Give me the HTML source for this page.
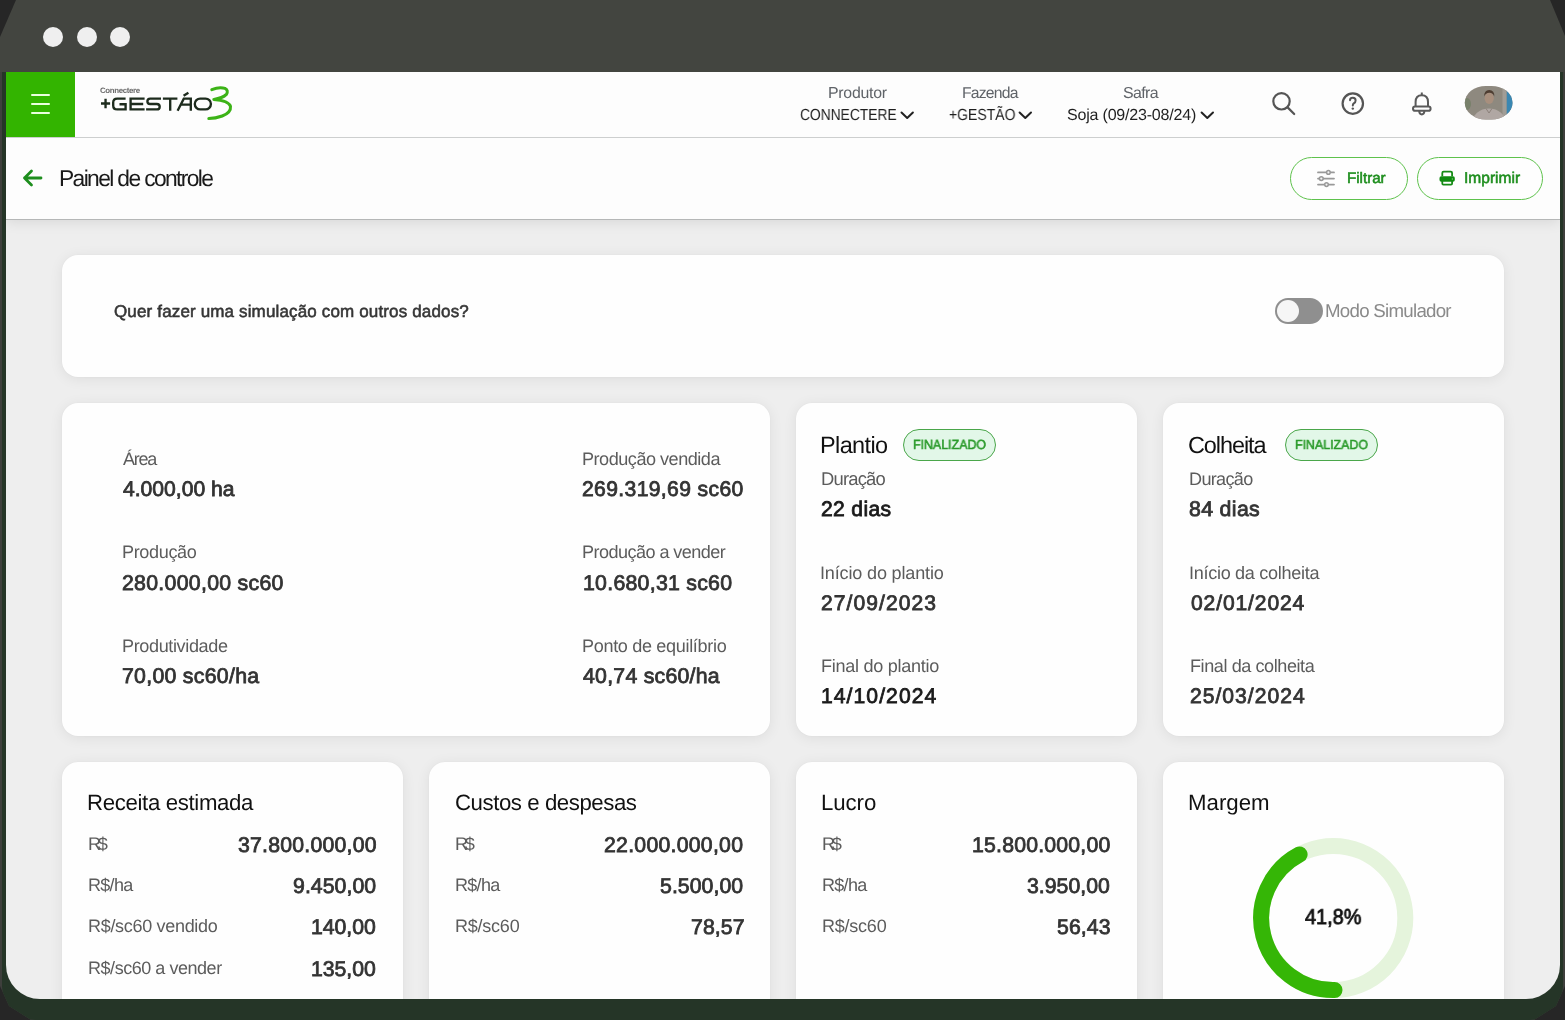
<!DOCTYPE html>
<html><head><meta charset="utf-8">
<style>
html,body{margin:0;padding:0;}
body{width:1565px;height:1020px;overflow:hidden;position:relative;background:#262626;font-family:"Liberation Sans",sans-serif;}
.frame{position:absolute;left:0;top:0;width:1565px;height:1020px;background:linear-gradient(#434540 0,#434540 72px,#3e3f3c 72px);clip-path:polygon(16px 0,1550px 0,1565px 36px,1565px 986px,1556px 1006px,1534px 1020px,31px 1020px,9px 1006px,0 986px,0 37px);overflow:hidden;}
.green{position:absolute;left:2px;top:72px;width:1561px;height:948px;background:#253527;border-radius:0 0 34px 34px;}
.dot{position:absolute;top:27px;width:20px;height:20px;border-radius:50%;background:#efefef;}
.screen{position:absolute;left:6px;top:72px;width:1554px;height:927px;background:#eeeeee;border-radius:0 0 34px 34px;overflow:hidden;}
.g{position:absolute;}
.hdr{position:absolute;left:0;top:0;width:1554px;height:65px;background:#fdfdfd;border-bottom:1px solid #cdcfcf;}
.menu{position:absolute;left:0;top:0;width:69px;height:65px;background:#33b400;}
.menu i{position:absolute;left:25px;width:19px;height:2.4px;background:#eaffdf;border-radius:1px;}
.sub{position:absolute;left:0;top:66px;width:1554px;height:81px;background:#fdfdfd;border-bottom:1px solid #b5b7b7;box-shadow:0 3px 12px rgba(0,0,0,0.085);}
.card{position:absolute;background:#fefefe;border-radius:16px;box-shadow:0 2px 14px rgba(0,0,0,0.075),0 0 2px rgba(0,0,0,0.03);}
.btn{position:absolute;border:1.6px solid #5ec24c;border-radius:22px;box-sizing:border-box;background:#fefefe;}
.badge{position:absolute;border:1.8px solid #4aa64a;border-radius:16px;box-sizing:border-box;background:#e2f7e8;}
.t{position:absolute;white-space:nowrap;text-rendering:geometricPrecision;will-change:transform;}
.toggle{position:absolute;left:1269px;top:226px;width:48px;height:26px;border-radius:13px;background:#8f8f8f;}
.toggle i{position:absolute;left:2px;top:2px;width:22px;height:22px;border-radius:50%;background:#f6f6f6;}
</style></head><body>
<div class="frame">
  <div class="green"></div>
  <div class="dot" style="left:43px"></div>
  <div class="dot" style="left:77px"></div>
  <div class="dot" style="left:110px"></div>
  <div class="screen">
    <div class="sub"></div>
    <div class="hdr">
      <div class="menu"><i style="top:22px"></i><i style="top:30.5px"></i><i style="top:39.5px"></i></div>
    </div>
    <!-- cards (screen coords: x-6, y-72) -->
    <div class="card" style="left:56px;top:183px;width:1442px;height:122px;"></div>
    <div class="card" style="left:56px;top:331px;width:708px;height:333px;"></div>
    <div class="card" style="left:790px;top:331px;width:341px;height:333px;"></div>
    <div class="card" style="left:1157px;top:331px;width:341px;height:333px;"></div>
    <div class="card" style="left:56px;top:690px;width:341px;height:300px;"></div>
    <div class="card" style="left:423px;top:690px;width:341px;height:300px;"></div>
    <div class="card" style="left:790px;top:690px;width:341px;height:300px;"></div>
    <div class="card" style="left:1157px;top:690px;width:341px;height:300px;"></div>
    <div class="toggle"><i></i></div>
  </div>
</div>
<!-- global overlay elements -->
<div class="btn" style="left:1290px;top:157px;width:118px;height:43px;"></div>
<div class="btn" style="left:1417px;top:157px;width:126px;height:43px;"></div>
<div class="badge" style="left:903px;top:429px;width:93px;height:32px;"></div>
<div class="badge" style="left:1285px;top:429px;width:93px;height:32px;"></div>
<svg class="g" style="left:0;top:0" width="1565" height="1020" viewBox="0 0 1565 1020">
  <!-- back arrow -->
  <g fill="none" stroke="#1e8e1e" stroke-width="2.8" stroke-linecap="round" stroke-linejoin="round">
    <path d="M24.5,178 H41 M31.5,171 L24.5,178 L31.5,185"/>
  </g>
  <!-- chevrons -->
  <g fill="none" stroke="#222" stroke-width="2" stroke-linecap="round" stroke-linejoin="round">
    <path d="M901.5,112.5 L907.2,118 L912.9,112.5"/>
    <path d="M1019.6,112.5 L1025.3,118 L1031,112.5"/>
    <path d="M1201.6,112.5 L1207.3,118 L1213,112.5"/>
  </g>
  <!-- search -->
  <g fill="none" stroke="#555" stroke-width="2.2" stroke-linecap="round">
    <circle cx="1281.5" cy="101.3" r="8.2"/>
    <path d="M1287.6,107.4 L1294.2,114"/>
  </g>
  <!-- help -->
  <g fill="none" stroke="#555" stroke-width="2.2">
    <circle cx="1352.8" cy="103.6" r="10.2"/>
  </g>
  <path d="M1350,100.2 Q1350.2,97.8 1352.8,97.8 Q1355.6,97.8 1355.6,100.4 Q1355.6,102.2 1353.8,103.4 Q1352.8,104.2 1352.8,105.5" fill="none" stroke="#555" stroke-width="2" stroke-linecap="round"/>
  <circle cx="1352.8" cy="108.6" r="1.2" fill="#555"/>
  <!-- bell -->
  <g fill="none" stroke="#5a5a5a" stroke-width="2" stroke-linejoin="round">
    <path d="M1421.8,92.5 V95.2"/>
    <path d="M1415.6,106.6 V102 Q1415.6,95.2 1421.8,95.2 Q1428,95.2 1428,102 V106.6"/>
    <rect x="1413" y="106.6" width="17.6" height="4.2" rx="2.1"/>
    <path d="M1419.2,111 Q1419.4,114.4 1421.8,114.4 Q1424.2,114.4 1424.4,111"/>
  </g>
  <!-- avatar -->
  <defs>
    <radialGradient id="face" cx="0.5" cy="0.35" r="0.25"><stop offset="0" stop-color="#b79c86"/><stop offset="0.6" stop-color="#8c7565"/><stop offset="1" stop-color="#8d8a80" stop-opacity="0"/></radialGradient>
    <radialGradient id="shirt" cx="0.5" cy="1.05" r="0.55"><stop offset="0" stop-color="#c0b5b0"/><stop offset="0.7" stop-color="#a9a09a"/><stop offset="1" stop-color="#8d8a80" stop-opacity="0"/></radialGradient>
    <clipPath id="avclip"><rect x="1464.8" y="85.9" width="47.7" height="33.6" rx="21" ry="16.8"/></clipPath>
  </defs>
  <g clip-path="url(#avclip)">
    <rect x="1464" y="85" width="50" height="36" fill="#8e897f"/>
    <ellipse cx="1467" cy="104" rx="4" ry="6" fill="#6f7d62" opacity="0.7"/>
    <rect x="1506.5" y="85" width="8" height="36" fill="#3a87b2"/>
    <rect x="1502.5" y="85" width="4" height="36" fill="#a19d96"/>
    <ellipse cx="1489" cy="123" rx="17" ry="14.5" fill="#b0a7a3"/>
    <path d="M1486,108.5 L1489,113 L1492,108.5" fill="none" stroke="#8b807a" stroke-width="1"/>
    <ellipse cx="1489.2" cy="98.2" rx="4.6" ry="5.8" fill="#a88f7d"/>
    <path d="M1484.3,96.5 Q1484,90 1489.2,90 Q1494.6,90 1494.2,96.5 Q1493,92.6 1489.2,92.8 Q1485.6,92.8 1484.3,96.5Z" fill="#4e3d31"/>
  </g>
  <!-- sliders icon -->
  <g fill="none" stroke="#999" stroke-width="1.8" stroke-linecap="round">
    <path d="M1318,172.4 H1334 M1318,178.6 H1334 M1318,184.6 H1334"/>
  </g>
  <g fill="#f4f4f4" stroke="#999" stroke-width="1.5">
    <circle cx="1328.4" cy="172.4" r="1.8"/>
    <circle cx="1321.3" cy="178.6" r="1.9"/>
    <circle cx="1326.5" cy="184.6" r="1.8"/>
  </g>
  <!-- printer icon -->
  <path d="M1442.3,176.3 V173 Q1442.3,171.7 1443.6,171.7 H1450.8 Q1452.1,171.7 1452.1,173 V176.3" fill="none" stroke="#158a15" stroke-width="1.8"/>
  <rect x="1439.5" y="176.2" width="15.3" height="5.6" rx="1.8" fill="#0f8a0f"/>
  <path d="M1442.3,181 V183.6 Q1442.3,184.7 1443.4,184.7 H1451 Q1452.1,184.7 1452.1,183.6 V181" fill="none" stroke="#158a15" stroke-width="1.8"/>
  <circle cx="1452.4" cy="179" r="0.75" fill="#6fd46f"/>
  <!-- donut -->
  <circle cx="1333.3" cy="918.1" r="72" fill="none" stroke="#e5f4dc" stroke-width="16"/>
  <path d="M1334.5,990.1 A72,72 0 0 1 1299.6,854.4" fill="none" stroke="#35b606" stroke-width="16" stroke-linecap="round"/>
  <!-- logo -->
  <g fill="none" stroke="#1d2b1d" stroke-width="2.35">
    <path d="M101,103.5 H110.1 M105.55,98.7 V108.3"/>
    <path d="M125.6,98.6 H117.2 Q113.2,98.6 113.2,102.6 V105.4 Q113.2,109.4 117.2,109.4 H125.6 V104.2 H119.5"/>
    <path d="M144.6,98.6 H130.6 V109.4 H144.6 M130.6,104 H143.2"/>
    <path d="M161,98.6 H150.2 Q147.4,98.6 147.4,101.3 Q147.4,104 150.2,104 H156.8 Q159.7,104 159.7,106.7 Q159.7,109.4 156.8,109.4 H146.1"/>
    <path d="M162.9,98.6 H177.4 M170.2,98.6 V110.7"/>
    <path d="M177.6,110.7 L183.8,98.6 H190.8 V110.7 M180.6,104.6 H190.8"/>
    <rect x="194.8" y="98.6" width="16.1" height="10.8" rx="5.4"/>
  </g>
  <path d="M183.6,95.8 L188.4,92.8" stroke="#1d2b1d" stroke-width="2.4"/>
  <path d="M211.8,89.6 Q219.5,86.4 225,88.4 Q228.8,90.2 226.4,94.4 Q222.6,98.2 213.8,99.4 Q229.2,100.8 230.5,106.4 Q231.2,112.6 222.2,116 Q215.4,118.4 208.8,118.6" fill="none" stroke="#3cb317" stroke-width="3" stroke-linecap="round" stroke-linejoin="round"/>
</svg>
<div class="t" id="produtor" style="left:828.00px;top:85.80px;font-size:15.878px;line-height:15.878px;letter-spacing:-0.250px;color:#5f6368;font-weight:400;">Produtor</div>
<div class="t" id="connectere" style="left:799.56px;top:108.08px;font-size:16.005px;line-height:16.005px;letter-spacing:0.000px;color:#1f1f1f;font-weight:400;transform:scaleX(0.8632);transform-origin:0 0;">CONNECTERE</div>
<div class="t" id="fazenda" style="left:961.80px;top:85.86px;font-size:15.740px;line-height:15.740px;letter-spacing:-0.793px;color:#5f6368;font-weight:400;">Fazenda</div>
<div class="t" id="gestao" style="left:948.56px;top:107.05px;font-size:16.061px;line-height:16.061px;letter-spacing:0.000px;color:#1f1f1f;font-weight:400;transform:scaleX(0.8722);transform-origin:0 0;">+GESTÃO</div>
<div class="t" id="safra" style="left:1123.20px;top:85.61px;font-size:15.934px;line-height:15.934px;letter-spacing:-0.600px;color:#5f6368;font-weight:400;">Safra</div>
<div class="t" id="soja" style="left:1067.00px;top:107.24px;font-size:16.046px;line-height:16.046px;letter-spacing:-0.205px;color:#1f1f1f;font-weight:400;">Soja (09/23-08/24)</div>
<div class="t" id="painel" style="left:58.80px;top:166.69px;font-size:22.831px;line-height:22.831px;letter-spacing:-1.633px;color:#1a1a1a;font-weight:400;">Painel de controle</div>
<div class="t" id="filtrar" style="left:1346.60px;top:171.16px;font-size:15.205px;line-height:15.205px;letter-spacing:-0.027px;color:#1e8e1e;font-weight:400;-webkit-text-stroke:0.55px #1e8e1e;">Filtrar</div>
<div class="t" id="imprimir" style="left:1463.80px;top:171.33px;font-size:15.562px;line-height:15.562px;letter-spacing:0.000px;color:#1e8e1e;font-weight:400;-webkit-text-stroke:0.55px #1e8e1e;">Imprimir</div>
<div class="t" id="quer" style="left:114.00px;top:302.65px;font-size:17.015px;line-height:17.015px;letter-spacing:0.148px;color:#363636;font-weight:400;-webkit-text-stroke:0.55px #363636;">Quer fazer uma simulação com outros dados?</div>
<div class="t" id="modo" style="left:1325.40px;top:301.73px;font-size:18.694px;line-height:18.694px;letter-spacing:-0.729px;color:#8a8a8a;font-weight:400;">Modo Simulador</div>
<div class="t" id="area" style="left:122.60px;top:450.29px;font-size:18.030px;line-height:18.030px;letter-spacing:-1.263px;color:#5c5c5c;font-weight:400;">Área</div>
<div class="t" id="areav" style="left:122.60px;top:478.62px;font-size:21.113px;line-height:21.113px;letter-spacing:0.010px;color:#333333;font-weight:400;-webkit-text-stroke:0.8px #333333;">4.000,00 ha</div>
<div class="t" id="prod" style="left:122.00px;top:543.26px;font-size:18.078px;line-height:18.078px;letter-spacing:-0.358px;color:#5c5c5c;font-weight:400;">Produção</div>
<div class="t" id="prodv" style="left:122.00px;top:573.47px;font-size:21.296px;line-height:21.296px;letter-spacing:0.287px;color:#333333;font-weight:400;-webkit-text-stroke:0.8px #333333;">280.000,00 sc60</div>
<div class="t" id="produt" style="left:122.00px;top:637.26px;font-size:18.078px;line-height:18.078px;letter-spacing:-0.374px;color:#5c5c5c;font-weight:400;">Produtividade</div>
<div class="t" id="produtv" style="left:121.80px;top:665.97px;font-size:21.296px;line-height:21.296px;letter-spacing:0.283px;color:#333333;font-weight:400;-webkit-text-stroke:0.8px #333333;">70,00 sc60/ha</div>
<div class="t" id="pvend" style="left:582.20px;top:450.28px;font-size:18.086px;line-height:18.086px;letter-spacing:-0.483px;color:#5c5c5c;font-weight:400;">Produção vendida</div>
<div class="t" id="pvendv" style="left:582.20px;top:478.62px;font-size:21.113px;line-height:21.113px;letter-spacing:0.366px;color:#333333;font-weight:400;-webkit-text-stroke:0.8px #333333;">269.319,69 sc60</div>
<div class="t" id="paven" style="left:582.20px;top:543.27px;font-size:18.058px;line-height:18.058px;letter-spacing:-0.542px;color:#5c5c5c;font-weight:400;">Produção a vender</div>
<div class="t" id="pavenv" style="left:583.00px;top:573.47px;font-size:21.296px;line-height:21.296px;letter-spacing:0.270px;color:#333333;font-weight:400;-webkit-text-stroke:0.8px #333333;">10.680,31 sc60</div>
<div class="t" id="ponto" style="left:582.20px;top:637.27px;font-size:18.058px;line-height:18.058px;letter-spacing:-0.324px;color:#5c5c5c;font-weight:400;">Ponto de equilíbrio</div>
<div class="t" id="pontov" style="left:583.00px;top:665.97px;font-size:21.296px;line-height:21.296px;letter-spacing:0.250px;color:#333333;font-weight:400;-webkit-text-stroke:0.8px #333333;">40,74 sc60/ha</div>
<div class="t" id="pltitle" style="left:820.40px;top:433.70px;font-size:23.463px;line-height:23.463px;letter-spacing:-0.607px;color:#111;font-weight:400;">Plantio</div>
<div class="t" id="plbadge" style="left:912.80px;top:437.79px;font-size:13.285px;line-height:13.285px;letter-spacing:0.000px;color:#2a9a2a;font-weight:400;-webkit-text-stroke:0.55px #2a9a2a;transform:scaleX(0.9351);transform-origin:0 0;">FINALIZADO</div>
<div class="t" id="pldur" style="left:821.40px;top:469.95px;font-size:18.405px;line-height:18.405px;letter-spacing:-0.805px;color:#5c5c5c;font-weight:400;">Duração</div>
<div class="t" id="pldurv" style="left:821.40px;top:498.62px;font-size:21.113px;line-height:21.113px;letter-spacing:0.333px;color:#1a1a1a;font-weight:400;-webkit-text-stroke:0.8px #1a1a1a;">22 dias</div>
<div class="t" id="plini" style="left:820.00px;top:563.77px;font-size:18.060px;line-height:18.060px;letter-spacing:-0.162px;color:#5c5c5c;font-weight:400;">Início do plantio</div>
<div class="t" id="pliniv" style="left:821.00px;top:593.16px;font-size:21.066px;line-height:21.066px;letter-spacing:1.073px;color:#333333;font-weight:400;-webkit-text-stroke:0.8px #333333;">27/09/2023</div>
<div class="t" id="plfim" style="left:821.00px;top:656.77px;font-size:18.060px;line-height:18.060px;letter-spacing:-0.280px;color:#5c5c5c;font-weight:400;">Final do plantio</div>
<div class="t" id="plfimv" style="left:821.00px;top:686.12px;font-size:21.113px;line-height:21.113px;letter-spacing:1.072px;color:#1a1a1a;font-weight:400;-webkit-text-stroke:0.8px #1a1a1a;">14/10/2024</div>
<div class="t" id="cotitle" style="left:1188.40px;top:433.70px;font-size:23.463px;line-height:23.463px;letter-spacing:-1.072px;color:#111;font-weight:400;">Colheita</div>
<div class="t" id="cobadge" style="left:1294.56px;top:438.00px;font-size:13.051px;line-height:13.051px;letter-spacing:0.000px;color:#2a9a2a;font-weight:400;-webkit-text-stroke:0.55px #2a9a2a;transform:scaleX(0.9502);transform-origin:0 0;">FINALIZADO</div>
<div class="t" id="codur" style="left:1189.00px;top:470.26px;font-size:18.078px;line-height:18.078px;letter-spacing:-0.667px;color:#5c5c5c;font-weight:400;">Duração</div>
<div class="t" id="codurv" style="left:1189.00px;top:499.47px;font-size:21.296px;line-height:21.296px;letter-spacing:0.347px;color:#333333;font-weight:400;-webkit-text-stroke:0.8px #333333;">84 dias</div>
<div class="t" id="coini" style="left:1188.60px;top:563.77px;font-size:18.054px;line-height:18.054px;letter-spacing:-0.293px;color:#5c5c5c;font-weight:400;">Início da colheita</div>
<div class="t" id="coiniv" style="left:1190.60px;top:593.16px;font-size:21.066px;line-height:21.066px;letter-spacing:0.887px;color:#333333;font-weight:400;-webkit-text-stroke:0.8px #333333;">02/01/2024</div>
<div class="t" id="cofim" style="left:1189.60px;top:656.77px;font-size:18.054px;line-height:18.054px;letter-spacing:-0.417px;color:#5c5c5c;font-weight:400;">Final da colheita</div>
<div class="t" id="cofimv" style="left:1189.60px;top:686.12px;font-size:21.113px;line-height:21.113px;letter-spacing:0.997px;color:#333333;font-weight:400;-webkit-text-stroke:0.8px #333333;">25/03/2024</div>
<div class="t" id="ret" style="left:87.20px;top:792.19px;font-size:22.217px;line-height:22.217px;letter-spacing:-0.340px;color:#111;font-weight:400;">Receita estimada</div>
<div class="t" id="rel0" style="left:88.20px;top:834.76px;font-size:18.186px;line-height:18.186px;letter-spacing:-3.400px;color:#5c5c5c;font-weight:400;">R$</div>
<div class="t" id="rev0" style="left:238.00px;top:834.52px;font-size:21.237px;line-height:21.237px;letter-spacing:0.239px;color:#333333;font-weight:400;-webkit-text-stroke:0.8px #333333;">37.800.000,00</div>
<div class="t" id="rel1" style="left:88.20px;top:876.29px;font-size:18.013px;line-height:18.013px;letter-spacing:-0.700px;color:#5c5c5c;font-weight:400;">R$/ha</div>
<div class="t" id="rev1" style="left:293.00px;top:876.01px;font-size:21.246px;line-height:21.246px;letter-spacing:0.070px;color:#333333;font-weight:400;-webkit-text-stroke:0.8px #333333;">9.450,00</div>
<div class="t" id="rel2" style="left:88.20px;top:916.79px;font-size:18.013px;line-height:18.013px;letter-spacing:-0.309px;color:#5c5c5c;font-weight:400;">R$/sc60 vendido</div>
<div class="t" id="rev2" style="left:311.40px;top:916.52px;font-size:21.237px;line-height:21.237px;letter-spacing:-0.040px;color:#333333;font-weight:400;-webkit-text-stroke:0.8px #333333;">140,00</div>
<div class="t" id="rel3" style="left:88.20px;top:959.29px;font-size:18.013px;line-height:18.013px;letter-spacing:-0.461px;color:#5c5c5c;font-weight:400;">R$/sc60 a vender</div>
<div class="t" id="rev3" style="left:311.40px;top:959.02px;font-size:21.237px;line-height:21.237px;letter-spacing:-0.040px;color:#333333;font-weight:400;-webkit-text-stroke:0.8px #333333;">135,00</div>
<div class="t" id="cut" style="left:455.20px;top:792.19px;font-size:22.217px;line-height:22.217px;letter-spacing:-0.429px;color:#111;font-weight:400;">Custos e despesas</div>
<div class="t" id="cul0" style="left:455.20px;top:834.76px;font-size:18.186px;line-height:18.186px;letter-spacing:-3.400px;color:#5c5c5c;font-weight:400;">R$</div>
<div class="t" id="cuv0" style="left:604.00px;top:834.52px;font-size:21.237px;line-height:21.237px;letter-spacing:0.273px;color:#333333;font-weight:400;-webkit-text-stroke:0.8px #333333;">22.000.000,00</div>
<div class="t" id="cul1" style="left:455.20px;top:876.29px;font-size:18.013px;line-height:18.013px;letter-spacing:-0.700px;color:#5c5c5c;font-weight:400;">R$/ha</div>
<div class="t" id="cuv1" style="left:660.20px;top:876.01px;font-size:21.246px;line-height:21.246px;letter-spacing:0.070px;color:#333333;font-weight:400;-webkit-text-stroke:0.8px #333333;">5.500,00</div>
<div class="t" id="cul2" style="left:455.20px;top:916.79px;font-size:18.013px;line-height:18.013px;letter-spacing:-0.230px;color:#5c5c5c;font-weight:400;">R$/sc60</div>
<div class="t" id="cuv2" style="left:690.80px;top:916.52px;font-size:21.237px;line-height:21.237px;letter-spacing:0.125px;color:#333333;font-weight:400;-webkit-text-stroke:0.8px #333333;">78,57</div>
<div class="t" id="lut" style="left:821.20px;top:792.19px;font-size:22.217px;line-height:22.217px;letter-spacing:-0.075px;color:#111;font-weight:400;">Lucro</div>
<div class="t" id="lul0" style="left:822.20px;top:834.76px;font-size:18.186px;line-height:18.186px;letter-spacing:-3.400px;color:#5c5c5c;font-weight:400;">R$</div>
<div class="t" id="luv0" style="left:972.20px;top:834.51px;font-size:21.246px;line-height:21.246px;letter-spacing:0.204px;color:#333333;font-weight:400;-webkit-text-stroke:0.8px #333333;">15.800.000,00</div>
<div class="t" id="lul1" style="left:822.20px;top:876.29px;font-size:18.013px;line-height:18.013px;letter-spacing:-0.700px;color:#5c5c5c;font-weight:400;">R$/ha</div>
<div class="t" id="luv1" style="left:1027.00px;top:876.02px;font-size:21.237px;line-height:21.237px;letter-spacing:0.036px;color:#333333;font-weight:400;-webkit-text-stroke:0.8px #333333;">3.950,00</div>
<div class="t" id="lul2" style="left:822.20px;top:916.79px;font-size:18.013px;line-height:18.013px;letter-spacing:-0.230px;color:#5c5c5c;font-weight:400;">R$/sc60</div>
<div class="t" id="luv2" style="left:1056.80px;top:916.52px;font-size:21.237px;line-height:21.237px;letter-spacing:0.125px;color:#333333;font-weight:400;-webkit-text-stroke:0.8px #333333;">56,43</div>
<div class="t" id="mat" style="left:1187.60px;top:792.19px;font-size:22.226px;line-height:22.226px;letter-spacing:0.020px;color:#111;font-weight:400;">Margem</div>
<div class="t" id="mav" style="left:1305.00px;top:906.20px;font-size:21.611px;line-height:21.611px;letter-spacing:0.000px;color:#111;font-weight:400;-webkit-text-stroke:0.8px #111;transform:scaleX(0.9215);transform-origin:0 0;">41,8%</div>
<div class="t" id="connlogo" style="left:100.00px;top:86.88px;font-size:7.895px;line-height:7.895px;letter-spacing:-0.367px;color:#6b6b6b;font-weight:700;">Connectere</div>
</body></html>
